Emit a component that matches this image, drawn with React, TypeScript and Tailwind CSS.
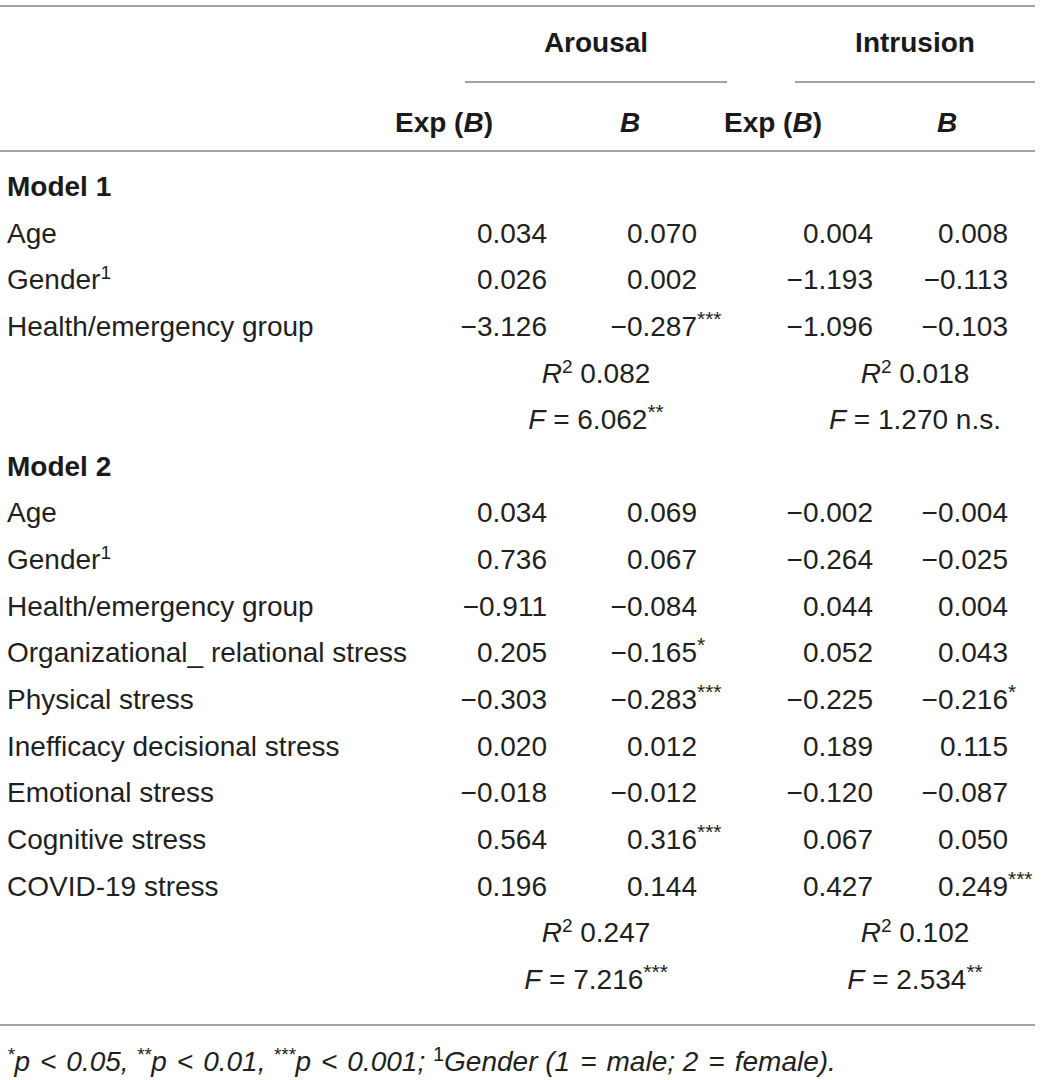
import React from "react";

type Cell = { v: string; s?: string };
type Row =
  | { kind: "head"; label: string }
  | { kind: "data"; label: string; sup?: string; cells: Cell[] }
  | { kind: "r2"; a: string; b: string }
  | { kind: "f"; a: string; as?: string; b: string; bs?: string };

const rows: Row[] = [
  { kind: "head", label: "Model 1" },
  { kind: "data", label: "Age", cells: [{ v: "0.034" }, { v: "0.070" }, { v: "0.004" }, { v: "0.008" }] },
  { kind: "data", label: "Gender", sup: "1", cells: [{ v: "0.026" }, { v: "0.002" }, { v: "\u22121.193" }, { v: "\u22120.113" }] },
  { kind: "data", label: "Health/emergency group", cells: [{ v: "\u22123.126" }, { v: "\u22120.287", s: "***" }, { v: "\u22121.096" }, { v: "\u22120.103" }] },
  { kind: "r2", a: "0.082", b: "0.018" },
  { kind: "f", a: "6.062", as: "**", b: "1.270 n.s." },
  { kind: "head", label: "Model 2" },
  { kind: "data", label: "Age", cells: [{ v: "0.034" }, { v: "0.069" }, { v: "\u22120.002" }, { v: "\u22120.004" }] },
  { kind: "data", label: "Gender", sup: "1", cells: [{ v: "0.736" }, { v: "0.067" }, { v: "\u22120.264" }, { v: "\u22120.025" }] },
  { kind: "data", label: "Health/emergency group", cells: [{ v: "\u22120.911" }, { v: "\u22120.084" }, { v: "0.044" }, { v: "0.004" }] },
  { kind: "data", label: "Organizational_ relational stress", cells: [{ v: "0.205" }, { v: "\u22120.165", s: "*" }, { v: "0.052" }, { v: "0.043" }] },
  { kind: "data", label: "Physical stress", cells: [{ v: "\u22120.303" }, { v: "\u22120.283", s: "***" }, { v: "\u22120.225" }, { v: "\u22120.216", s: "*" }] },
  { kind: "data", label: "Inefficacy decisional stress", cells: [{ v: "0.020" }, { v: "0.012" }, { v: "0.189" }, { v: "0.115" }] },
  { kind: "data", label: "Emotional stress", cells: [{ v: "\u22120.018" }, { v: "\u22120.012" }, { v: "\u22120.120" }, { v: "\u22120.087" }] },
  { kind: "data", label: "Cognitive stress", cells: [{ v: "0.564" }, { v: "0.316", s: "***" }, { v: "0.067" }, { v: "0.050" }] },
  { kind: "data", label: "COVID-19 stress", cells: [{ v: "0.196" }, { v: "0.144" }, { v: "0.427" }, { v: "0.249", s: "***" }] },
  { kind: "r2", a: "0.247", b: "0.102" },
  { kind: "f", a: "7.216", as: "***", b: "2.534", bs: "**" },
];

function Stars({ s }: { s: string }) {
  return <span className="align-super text-[21px] leading-none">{s}</span>;
}

function ValueCell({ c }: { c: Cell }) {
  return (
    <div className="flex justify-end whitespace-nowrap">
      <span>{c.v}</span>
      <span className="inline-block w-0 overflow-visible whitespace-nowrap">
        {c.s ? <Stars s={c.s} /> : null}
      </span>
    </div>
  );
}

function BodyRow({ r }: { r: Row }) {
  if (r.kind === "head") {
    return <div className="h-[46.65px] pl-[7px] font-bold text-[#1a1a1a]">{r.label}</div>;
  }
  if (r.kind === "data") {
    return (
      <div className="grid h-[46.65px] grid-cols-[460px_87px_150px_176px_135px]">
        <div className="pl-[7px] whitespace-nowrap">
          {r.label}
          {r.sup ? <span className="align-super text-[19px] leading-none">{r.sup}</span> : null}
        </div>
        {r.cells.map((c, i) => (
          <ValueCell key={i} c={c} />
        ))}
      </div>
    );
  }
  if (r.kind === "r2") {
    return (
      <div className="flex h-[46.65px] pl-[465px]">
        <div className="w-[262px] text-center whitespace-nowrap">
          <i>R</i>
          <span className="align-super text-[19px] leading-none">2</span> {r.a}
        </div>
        <div className="ml-[68px] w-[240px] text-center whitespace-nowrap">
          <i>R</i>
          <span className="align-super text-[19px] leading-none">2</span> {r.b}
        </div>
      </div>
    );
  }
  return (
    <div className="flex h-[46.65px] pl-[465px]">
      <div className="w-[262px] text-center whitespace-nowrap">
        <i>F</i> = {r.a}
        {r.as ? <Stars s={r.as} /> : null}
      </div>
      <div className="ml-[68px] w-[240px] text-center whitespace-nowrap">
        <i>F</i> = {r.b}
        {r.bs ? <Stars s={r.bs} /> : null}
      </div>
    </div>
  );
}

function Op({ c }: { c: string }) {
  return <span className="mx-[10px]">{c}</span>;
}

export default function App() {
  return (
    <div
      className="min-h-[1080px] w-[1052px] bg-white pt-[5px] text-[28px] leading-[32px] text-[#231f20]"
      style={{ fontFamily: '"Liberation Sans", Arial, sans-serif' }}
    >
      <div className="w-[1035px]">
        {/* header group row */}
        <div className="flex border-t-2 border-[#a3a3a3] pl-[465px]">
          <div className="h-[76px] w-[262px] border-b-2 border-[#a3a3a3] pt-[20px] text-center font-bold text-[#1a1a1a]">
            Arousal
          </div>
          <div className="ml-[68px] h-[76px] w-[240px] border-b-2 border-[#a3a3a3] pt-[20px] text-center font-bold text-[#1a1a1a]">
            Intrusion
          </div>
        </div>
        {/* header column row */}
        <div className="flex h-[69px] border-b-2 border-[#a3a3a3] pt-[24px] font-bold text-[#1a1a1a] whitespace-nowrap">
          <div className="w-[493px] text-right">
            Exp (<i>B</i>)
          </div>
          <div className="ml-[107px] w-[60px] text-center">
            <i>B</i>
          </div>
          <div className="w-[162px] text-right">
            Exp (<i>B</i>)
          </div>
          <div className="ml-[95px] w-[60px] text-center">
            <i>B</i>
          </div>
        </div>
        {/* body */}
        <div className="border-b-2 border-[#a3a3a3] pt-[12px] pb-[20px] leading-[46.65px]">
          {rows.map((r, i) => (
            <BodyRow key={i} r={r} />
          ))}
        </div>
        {/* footnote */}
        <div className="pt-[18px] pl-[7px] text-[28px] leading-[30px] italic whitespace-nowrap">
          <span className="align-super text-[19px] leading-none">*</span>p<Op c="<" />0.05,{" "}
          <span className="align-super text-[19px] leading-none">**</span>p<Op c="<" />0.01,{" "}
          <span className="align-super text-[19px] leading-none">***</span>p<Op c="<" />0.001;{" "}
          <span className="align-super text-[20px] not-italic leading-none">1</span>Gender (1<Op c="=" />male; 2<Op c="=" />female).
        </div>
      </div>
    </div>
  );
}
